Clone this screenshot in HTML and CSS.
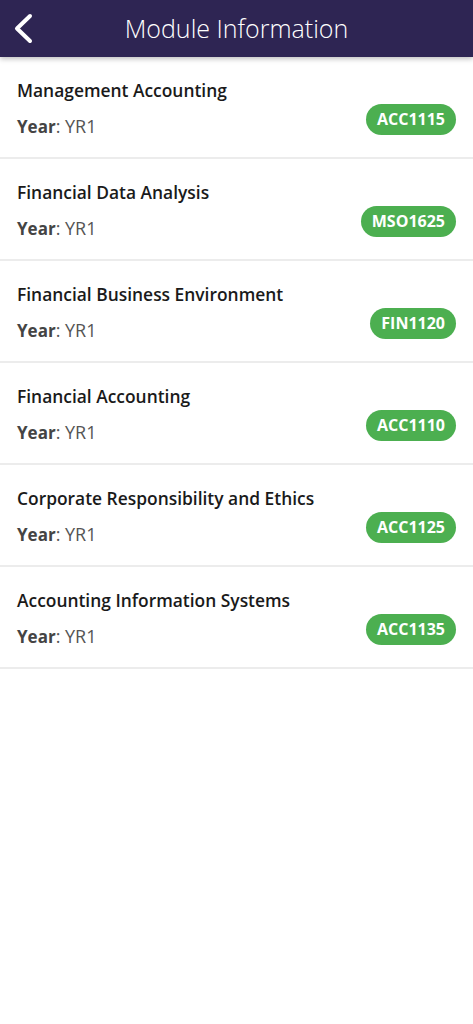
FILE: index.html
```html
<!DOCTYPE html>
<html lang="en">
<head>
    <meta charset="UTF-8">
    <meta name="viewport" content="width=device-width, initial-scale=1.0">
    <title>Module Information</title>
    <link rel="stylesheet" href="styles.css">
</head>
<body>
    <header class="topbar">
        <a class="back" href="#">
            <svg width="24" height="32" viewBox="0 0 24 32">
                <path d="M17 3 L4 15.5 L17 28" fill="none" stroke="#fff" stroke-width="4" stroke-linecap="round" stroke-linejoin="round"/>
            </svg>
        </a>
        <h1>Module Information</h1>
    </header>

    <ul class="modules">
        <li class="module">
            <div class="info">
                <div class="name">Management Accounting</div>
                <div class="year"><strong>Year</strong>: YR1</div>
            </div>
            <span class="code">ACC1115</span>
        </li>
        <li class="module">
            <div class="info">
                <div class="name">Financial Data Analysis</div>
                <div class="year"><strong>Year</strong>: YR1</div>
            </div>
            <span class="code">MSO1625</span>
        </li>
        <li class="module">
            <div class="info">
                <div class="name">Financial Business Environment</div>
                <div class="year"><strong>Year</strong>: YR1</div>
            </div>
            <span class="code">FIN1120</span>
        </li>
        <li class="module">
            <div class="info">
                <div class="name">Financial Accounting</div>
                <div class="year"><strong>Year</strong>: YR1</div>
            </div>
            <span class="code">ACC1110</span>
        </li>
        <li class="module">
            <div class="info">
                <div class="name">Corporate Responsibility and Ethics</div>
                <div class="year"><strong>Year</strong>: YR1</div>
            </div>
            <span class="code">ACC1125</span>
        </li>
        <li class="module">
            <div class="info">
                <div class="name">Accounting Information Systems</div>
                <div class="year"><strong>Year</strong>: YR1</div>
            </div>
            <span class="code">ACC1135</span>
        </li>
    </ul>
</body>
</html>
```

FILE: styles.css
```css
body {
    font-family: "Open Sans", "Noto Sans", sans-serif;
    background-color: #fff;
    margin: 0;
    padding: 0;
}

.topbar {
    height: 57px;
    background-color: #2e2553;
    box-shadow: 0 2px 5px rgba(0, 0, 0, 0.25);
    display: flex;
    align-items: center;
    position: relative;
}

.back {
    width: 24px;
    height: 32px;
    margin-left: 13px;
    display: flex;
}

.topbar h1 {
    flex: 1;
    margin: 0 0 2px -37px;
    text-align: center;
    color: #fff;
    font-weight: 300;
    font-size: 25px;
}

.modules {
    list-style: none;
    margin: 0;
    padding: 0;
}

.module {
    height: 102px;
    box-sizing: border-box;
    padding: 20px 17px 18px 17px;
    border-bottom: 2px solid #ececec;
    display: flex;
    justify-content: space-between;
}

.info {
    display: flex;
    flex-direction: column;
    gap: 10px;
}

.name {
    font-size: 17.4px;
    font-weight: 600;
    line-height: 26px;
    color: #1a1a1a;
}

.year {
    font-size: 18px;
    line-height: 26px;
    color: #555;
}

.year strong {
    font-weight: 700;
    font-size: 17px;
    color: #444;
}

.code {
    align-self: flex-end;
    margin-bottom: 4px;
    height: 31px;
    line-height: 31px;
    padding: 0 11px;
    border-radius: 16px;
    background-color: #4caf50;
    color: #fff;
    font-size: 16px;
    font-weight: 700;
}
```
